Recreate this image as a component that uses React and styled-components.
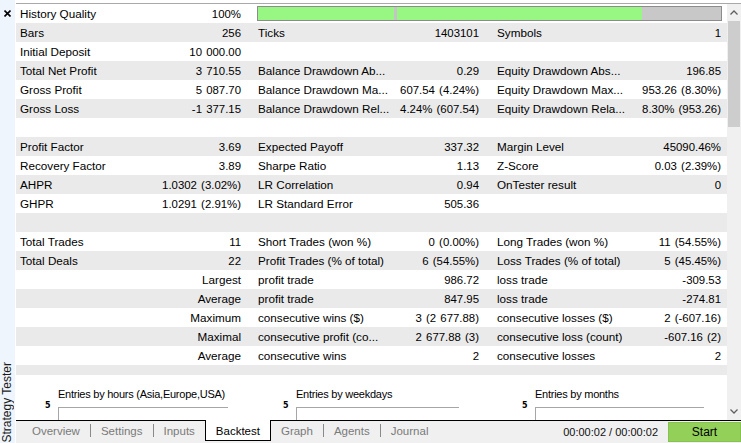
import React from "react";
import styled, { createGlobalStyle } from "styled-components";

const GlobalStyle = createGlobalStyle`
  html, body { margin: 0; padding: 0; background: #fff; overflow: hidden; }
  body {
    font-family: "Liberation Sans", Arial, sans-serif;
    font-size: 12px;
    color: #000;
  }
  * { box-sizing: border-box; }
`;

const Window = styled.div`
  display: flex;
  width: 741px;
  height: 443px;
  background: #fff;
`;

const Sidebar = styled.div`
  width: 16px;
  flex: none;
  background: #eef5fc;
  border-right: 1px solid #fff;
  display: flex;
  flex-direction: column;
  justify-content: space-between;
  align-items: center;
`;

const CloseBtn = styled.div`
  margin-top: 10px;
  margin-right: 1px;
  width: 7px;
  height: 7px;
  display: flex;
`;

const VerticalLabel = styled.div`
  writing-mode: vertical-rl;
  transform: rotate(180deg);
  font-size: 12px;
  line-height: 13px;
  color: #1b1b1b;
  margin-bottom: 1px;
  margin-right: 1px;
  white-space: nowrap;
`;

const Main = styled.div`
  flex: 1;
  min-width: 0;
  display: flex;
  flex-direction: column;
  padding-top: 3px;
`;

const Body = styled.div`
  flex: 1;
  min-height: 0;
  display: flex;
  border-top: 1px solid #a9a9a9;
`;

const Table = styled.div`
  flex: 1;
  min-width: 0;
  display: flex;
  flex-direction: column;
`;

const Row = styled.div`
  display: grid;
  grid-template-columns: 238px 239px 234px;
  height: 19px;
  background: ${(p) => (p.$alt ? "#eaeaea" : "#fff")};
`;

const Cell = styled.div`
  display: flex;
  align-items: center;
  justify-content: ${(p) => (p.$right ? "flex-end" : "space-between")};
  padding: 0 ${(p) => p.$pr}px 0 4px;
  white-space: nowrap;
  overflow: hidden;
`;

const Label = styled.span`
  font-size: 11.7px;
`;

const Value = styled.span`
  font-size: 11.4px;
  word-spacing: 1px;
`;

const QualityBar = styled.div`
  grid-column: 2 / 4;
  margin: 2px 5px 2px 3px;
  border: 1px solid #8c8c8c;
  background: #c8c8c8;
  display: flex;
`;

const QualityFill = styled.div`
  background: #98f782;
  height: 100%;
  display: flex;
  justify-content: flex-start;
`;

const QualityTick = styled.div`
  width: 3px;
  height: 100%;
  background: #c4c4c4;
  margin-left: 136px;
`;

const GapStrip = styled.div`
  height: 10px;
  background: #eaeaea;
`;

const Charts = styled.div`
  flex: 1;
  display: grid;
  grid-template-columns: 238px 239px 234px;
`;

const Chart = styled.div`
  display: flex;
  flex-direction: column;
`;

const ChartTitle = styled.div`
  padding: 13px 0 0 42px;
  height: 32px;
  font-size: 11px;
  letter-spacing: -0.25px;
  line-height: 13px;
  white-space: nowrap;
`;

const ChartBody = styled.div`
  flex: 1;
  display: grid;
  grid-template-columns: 13px ${(p) => p.$w}px;
  margin-left: 29px;
`;

const TickLabel = styled.div`
  font-family: "DejaVu Sans", sans-serif;
  font-size: 8px;
  font-weight: bold;
  line-height: 8px;
  margin-top: -5px;
`;

const PlotArea = styled.div`
  border-top: 1px solid #a6a6a6;
  border-left: 1px solid #a6a6a6;
`;

const Scrollbar = styled.div`
  width: 14px;
  flex: none;
  background: #f0f0f0;
  display: flex;
  flex-direction: column;
`;

const ArrowBtn = styled.div`
  height: 17px;
  display: flex;
  align-items: center;
  justify-content: center;
`;

const Thumb = styled.div`
  height: 106px;
  margin: 0 1px;
  background: #cdcdcd;
`;

const Track = styled.div`
  flex: 1;
`;

const TabBar = styled.div`
  height: 23px;
  flex: none;
  border-top: 1px solid #000;
  background: #f0f0f0;
  display: flex;
  align-items: flex-start;
  padding-left: 6px;
`;

const Tab = styled.div`
  height: ${(p) => (p.$active ? "21px" : "20px")};
  margin-top: ${(p) => (p.$active ? "-1px" : "0")};
  padding: 0 10px;
  display: flex;
  align-items: center;
  padding-top: ${(p) => (p.$active ? "1px" : "0")};
  color: ${(p) => (p.$active ? "#000" : "#7a7a7a")};
  background: ${(p) => (p.$active ? "#fff" : "transparent")};
  border: ${(p) => (p.$active ? "1px solid #000" : "none")};
  border-top: none;
  font-size: 11.5px;
`;

const Sep = styled.div`
  width: 1px;
  height: 13px;
  margin-top: 3px;
  background: #8a8a8a;
`;

const Status = styled.div`
  margin-left: auto;
  display: flex;
  align-items: flex-start;
`;

const TimeText = styled.div`
  height: 21px;
  display: flex;
  align-items: center;
  margin-right: 10px;
  font-size: 11px;
  color: #111;
`;

const StartButton = styled.button`
  width: 73px;
  height: 20px;
  margin-top: 1px;
  background: #92d05a;
  border: 1px solid #86c24e;
  font-family: "Liberation Sans", Arial, sans-serif;
  font-size: 12px;
  color: #000;
  padding: 0;
`;

const PAD = [13, 14, 6];

const rows = [
  { type: "quality" },
  { cells: [["Bars", "256"], ["Ticks", "1403101"], ["Symbols", "1"]] },
  { cells: [["Initial Deposit", "10 000.00"], null, null] },
  { cells: [["Total Net Profit", "3 710.55"], ["Balance Drawdown Ab...", "0.29"], ["Equity Drawdown Abs...", "196.85"]] },
  { cells: [["Gross Profit", "5 087.70"], ["Balance Drawdown Ma...", "607.54 (4.24%)"], ["Equity Drawdown Max...", "953.26 (8.30%)"]] },
  { cells: [["Gross Loss", "-1 377.15"], ["Balance Drawdown Rel...", "4.24% (607.54)"], ["Equity Drawdown Rela...", "8.30% (953.26)"]] },
  { cells: [null, null, null] },
  { cells: [["Profit Factor", "3.69"], ["Expected Payoff", "337.32"], ["Margin Level", "45090.46%"]] },
  { cells: [["Recovery Factor", "3.89"], ["Sharpe Ratio", "1.13"], ["Z-Score", "0.03 (2.39%)"]] },
  { cells: [["AHPR", "1.0302 (3.02%)"], ["LR Correlation", "0.94"], ["OnTester result", "0"]] },
  { cells: [["GHPR", "1.0291 (2.91%)"], ["LR Standard Error", "505.36"], null] },
  { cells: [null, null, null] },
  { cells: [["Total Trades", "11"], ["Short Trades (won %)", "0 (0.00%)"], ["Long Trades (won %)", "11 (54.55%)"]] },
  { cells: [["Total Deals", "22"], ["Profit Trades (% of total)", "6 (54.55%)"], ["Loss Trades (% of total)", "5 (45.45%)"]] },
  { right: "Largest", cells: [null, ["profit trade", "986.72"], ["loss trade", "-309.53"]] },
  { right: "Average", cells: [null, ["profit trade", "847.95"], ["loss trade", "-274.81"]] },
  { right: "Maximum", cells: [null, ["consecutive wins ($)", "3 (2 677.88)"], ["consecutive losses ($)", "2 (-607.16)"]] },
  { right: "Maximal", cells: [null, ["consecutive profit (co...", "2 677.88 (3)"], ["consecutive loss (count)", "-607.16 (2)"]] },
  { right: "Average", cells: [null, ["consecutive wins", "2"], ["consecutive losses", "2"]] },
];

const charts = [
  { title: "Entries by hours (Asia,Europe,USA)", w: 170 },
  { title: "Entries by weekdays", w: 163 },
  { title: "Entries by months", w: 169 },
];

const tabs = ["Overview", "Settings", "Inputs", "Backtest", "Graph", "Agents", "Journal"];
const ACTIVE = "Backtest";

function Chevron({ up }) {
  return (
    <svg width="8" height="5" viewBox="0 0 8 5">
      <polyline
        points={up ? "0.5,4.5 4,1 7.5,4.5" : "0.5,0.5 4,4 7.5,0.5"}
        fill="none"
        stroke="#606060"
        strokeWidth="1.3"
      />
    </svg>
  );
}

function DataRow({ row, alt }) {
  if (row.type === "quality") {
    return (
      <Row $alt={alt}>
        <Cell $pr={PAD[0]}>
          <Label>History Quality</Label>
          <Value>100%</Value>
        </Cell>
        <QualityBar>
          <QualityFill style={{ width: "83%" }}>
            <QualityTick />
          </QualityFill>
        </QualityBar>
      </Row>
    );
  }
  return (
    <Row $alt={alt}>
      {row.cells.map((c, i) => {
        if (i === 0 && row.right) {
          return (
            <Cell key={i} $pr={PAD[i]} $right>
              <Label>{row.right}</Label>
            </Cell>
          );
        }
        return (
          <Cell key={i} $pr={PAD[i]}>
            {c && <Label>{c[0]}</Label>}
            {c && <Value>{c[1]}</Value>}
          </Cell>
        );
      })}
    </Row>
  );
}

export default function App() {
  const tabNodes = [];
  tabs.forEach((t, i) => {
    if (i > 0 && t !== ACTIVE && tabs[i - 1] !== ACTIVE) {
      tabNodes.push(<Sep key={"s" + i} />);
    }
    tabNodes.push(
      <Tab key={t} $active={t === ACTIVE}>
        {t}
      </Tab>
    );
  });

  return (
    <>
      <GlobalStyle />
      <Window>
        <Sidebar>
          <CloseBtn>
            <svg width="7" height="7" viewBox="0 0 7 7">
              <path d="M0.5 0.5 L6.5 6.5 M6.5 0.5 L0.5 6.5" stroke="#000" strokeWidth="1.6" />
            </svg>
          </CloseBtn>
          <VerticalLabel>Strategy Tester</VerticalLabel>
        </Sidebar>
        <Main>
          <Body>
            <Table>
              {rows.map((r, i) => (
                <DataRow key={i} row={r} alt={i % 2 === 1} />
              ))}
              <GapStrip />
              <Charts>
                {charts.map((c) => (
                  <Chart key={c.title}>
                    <ChartTitle>{c.title}</ChartTitle>
                    <ChartBody $w={c.w}>
                      <TickLabel>5</TickLabel>
                      <PlotArea />
                    </ChartBody>
                  </Chart>
                ))}
              </Charts>
            </Table>
            <Scrollbar>
              <ArrowBtn>
                <Chevron up />
              </ArrowBtn>
              <Thumb />
              <Track />
              <ArrowBtn>
                <Chevron />
              </ArrowBtn>
            </Scrollbar>
          </Body>
          <TabBar>
            {tabNodes}
            <Status>
              <TimeText>00:00:02 / 00:00:02</TimeText>
              <StartButton>Start</StartButton>
            </Status>
          </TabBar>
        </Main>
      </Window>
    </>
  );
}
